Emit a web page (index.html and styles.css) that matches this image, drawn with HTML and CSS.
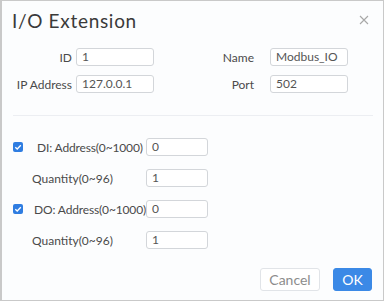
FILE: index.html
```html
<!DOCTYPE html>
<html>
<head>
<meta charset="utf-8">
<link rel="stylesheet" href="styles.css">
</head>
<body>
<div class="dialog">
  <div class="header">
    <div class="title">I/O Extension</div>
    <svg class="close" width="10" height="10" viewBox="0 0 10 10"><path d="M1 1L9 9M9 1L1 9" stroke="#a8a8a8" stroke-width="1.1" fill="none"/></svg>
  </div>
  <div class="basic">
    <label class="lbl l1">ID</label>
    <div class="input w78 ml">1</div>
    <label class="lbl l2">Name</label>
    <div class="input w78">Modbus_IO</div>
    <label class="lbl l1">IP Address</label>
    <div class="input w78 ml">127.0.0.1</div>
    <label class="lbl l2">Port</label>
    <div class="input w78">502</div>
  </div>
  <div class="divider"></div>
  <div class="io">
    <div class="row">
      <div class="cell">
        <span class="check"><svg width="10" height="10" viewBox="0 0 10 10"><path d="M2.3 5.2L4.2 7L7.8 3.2" stroke="#fff" stroke-width="1.3" fill="none"/></svg></span>
        <span class="txt di">DI: Address(0~1000)</span>
      </div>
      <div class="input w62">0</div>
    </div>
    <div class="row">
      <div class="cell"><span class="txt qty">Quantity(0~96)</span></div>
      <div class="input w62">1</div>
    </div>
    <div class="row">
      <div class="cell">
        <span class="check"><svg width="10" height="10" viewBox="0 0 10 10"><path d="M2.3 5.2L4.2 7L7.8 3.2" stroke="#fff" stroke-width="1.3" fill="none"/></svg></span>
        <span class="txt do">DO: Address(0~1000)</span>
      </div>
      <div class="input w62">0</div>
    </div>
    <div class="row">
      <div class="cell"><span class="txt qty">Quantity(0~96)</span></div>
      <div class="input w62">1</div>
    </div>
  </div>
  <div class="footer">
    <button class="btn cancel">Cancel</button>
    <button class="btn ok">OK</button>
  </div>
</div>
</body>
</html>
```
FILE: styles.css
```css
html, body {
  margin: 0;
  padding: 0;
  background: #ffffff;
}
body {
  font-family: "Lato", "Noto Sans", sans-serif;
  color: #4a4a4a;
}
.dialog {
  width: 381px;
  height: 299px;
  border: 1px solid #c9c9c9;
  border-left-width: 2px;
  background: #fcfdfe;
  box-sizing: content-box;
}
.header {
  display: flex;
  justify-content: space-between;
  align-items: flex-start;
  padding: 9px 14px 0 10px;
  height: 30px;
}
.title {
  font-size: 19px;
  letter-spacing: 0.7px;
  color: #3a3a3a;
  line-height: 22px;
}
.close {
  margin-top: 5px;
}
.basic {
  display: grid;
  grid-template-columns: 60px 82px 116px 78px;
  row-gap: 9px;
  padding-left: 10px;
  margin-top: 8px;
  align-items: center;
}
.lbl {
  font-size: 12px;
  color: #4a4a4a;
  text-align: right;
  white-space: nowrap;
}
.lbl.l2 { padding-right: 16px; }
.ml { margin-left: 4px; }
.input {
  box-sizing: border-box;
  height: 18px;
  border: 1px solid #d3d6da;
  border-radius: 3px;
  background: #fff;
  font-size: 12px;
  line-height: 16px;
  padding-left: 5px;
  color: #555;
  white-space: nowrap;
}
.w78 { width: 78px; }
.w62 { width: 62px; }
.divider {
  height: 1px;
  background: #eceef2;
  margin: 22px 10px 0 11px;
}
.io {
  display: flex;
  flex-direction: column;
  gap: 13px;
  padding-top: 22px;
  padding-left: 11px;
}
.row {
  display: grid;
  grid-template-columns: 133px 62px;
  align-items: center;
  height: 18px;
}
.cell {
  display: flex;
  align-items: center;
}
.check {
  width: 10px;
  height: 10px;
  background: #2f7de1;
  border-radius: 2px;
  display: flex;
}
.txt {
  font-size: 12px;
  color: #4a4a4a;
  white-space: nowrap;
}
.txt.di { margin-left: 14px; letter-spacing: -0.15px; }
.txt.do { margin-left: 11px; letter-spacing: -0.15px; }
.txt.qty { margin-left: 19px; }
.footer {
  display: flex;
  justify-content: flex-end;
  gap: 13px;
  padding-right: 11px;
  margin-top: 19px;
}
.btn {
  height: 23px;
  font-family: "Lato", "Noto Sans", sans-serif;
  font-size: 14px;
  border-radius: 3px;
  padding: 0;
}
.cancel {
  width: 60px;
  background: #fff;
  border: 1px solid #e1e4e8;
  color: #8c8c8c;
}
.ok {
  width: 39px;
  background: #3b89e6;
  border: 1px solid #3b89e6;
  color: #fff;
}
```
